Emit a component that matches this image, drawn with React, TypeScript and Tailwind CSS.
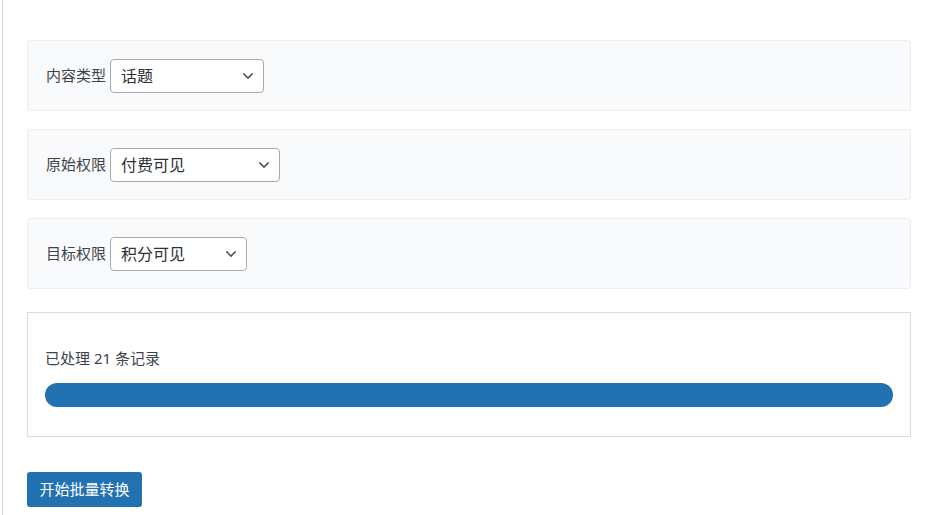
const font = { fontFamily: '"Noto Sans", "Noto Sans CJK SC", sans-serif' };

const Chevron = () => (
  <svg width="14" height="14" viewBox="0 0 20 20" className="shrink-0">
    <path d="M4 7l6 6 6-6" fill="none" stroke="#50575e" strokeWidth="2.2" strokeLinecap="round" strokeLinejoin="round" />
  </svg>
);

type FieldProps = { label: string; value: string; width: string };

const Field = ({ label, value, width }: FieldProps) => (
  <div className="flex items-center h-[71px] px-[18px] bg-[#f9fafb] border border-[#eceef0] rounded-[3px]">
    <span className="text-[15px] text-[#3c434a] mr-[4px]">{label}</span>
    <div className={`${width} h-[34px] flex items-center justify-between pl-[10px] pr-[8px] bg-white border border-[#a7aaad] rounded-[4px]`}>
      <span className="text-[16px] text-[#2c3338]">{value}</span>
      <Chevron />
    </div>
  </div>
);

export default function App() {
  return (
    <div className="w-[929px] h-[515px] overflow-hidden bg-white" style={font}>
      <div className="ml-[2px] h-full border-l border-[#dcdcde] pl-[24px] pr-[18px] pt-[40px]">
        <div className="flex flex-col gap-[18px]">
          <Field label="内容类型" value="话题" width="w-[154px]" />
          <Field label="原始权限" value="付费可见" width="w-[170px]" />
          <Field label="目标权限" value="积分可见" width="w-[137px]" />
        </div>
        <div className="mt-[23px] h-[125px] border border-[#dcdcde] bg-white px-[17px] pt-[34px]">
          <p className="text-[15px] text-[#3c434a] leading-[22px]">已处理 21 条记录</p>
          <div className="mt-[14px] h-[24px] rounded-full bg-[#2271b1]" />
        </div>
        <button className="mt-[35px] h-[35px] w-[115px] rounded-[3px] bg-[#2271b1] text-white text-[15px]">
          开始批量转换
        </button>
      </div>
    </div>
  );
}
